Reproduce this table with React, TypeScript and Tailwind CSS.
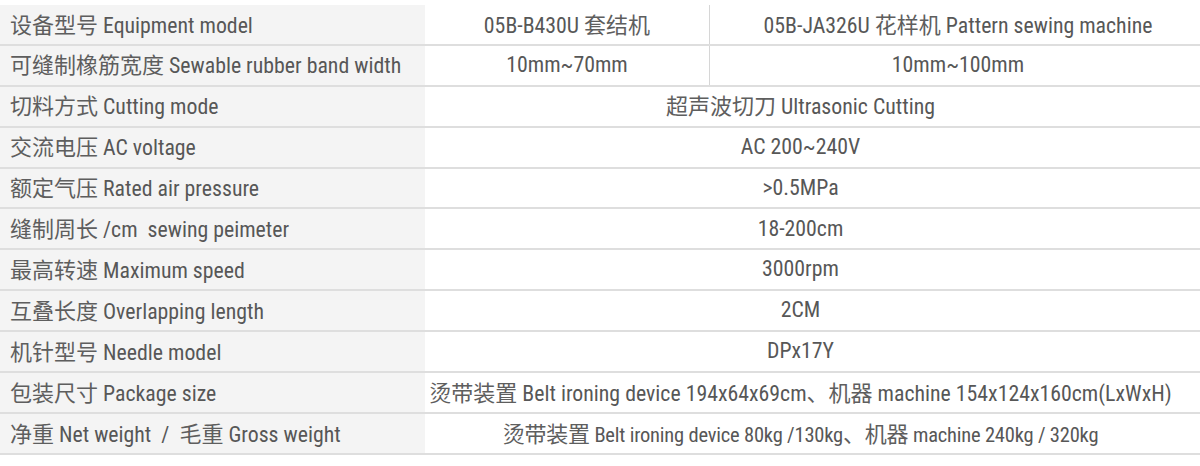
import React from "react";

const rows: { label: string; a: string; b?: string; small?: boolean }[] = [
    { label: "设备型号 Equipment model", a: "05B-B430U 套结机", b: "05B-JA326U 花样机 Pattern sewing machine" },
    { label: "可缝制橡筋宽度 Sewable rubber band width", a: "10mm~70mm", b: "10mm~100mm" },
    { label: "切料方式 Cutting mode", a: "超声波切刀 Ultrasonic Cutting" },
    { label: "交流电压 AC voltage", a: "AC 200~240V" },
    { label: "额定气压 Rated air pressure", a: ">0.5MPa" },
    { label: "缝制周长 /cm  sewing peimeter", a: "18-200cm" },
    { label: "最高转速 Maximum speed", a: "3000rpm" },
    { label: "互叠长度 Overlapping length", a: "2CM" },
    { label: "机针型号 Needle model", a: "DPx17Y" },
    { label: "包装尺寸 Package size", a: "烫带装置 Belt ironing device 194x64x69cm、机器 machine 154x124x160cm(LxWxH)" },
    { label: "净重 Net weight  /  毛重 Gross weight", a: "烫带装置 Belt ironing device 80kg /130kg、机器 machine 240kg / 320kg", small: true },
];

const font = "font-['Roboto_Condensed','Liberation_Sans_Narrow','Noto_Sans_CJK_SC',sans-serif]";

// CJK runs are drawn a bit larger than the latin text, as in the original
const Mixed = ({ text }: { text: string }) => {
    const parts = text.split(/([\u3000-\u9fff\uff00-\uffef]+)/).filter(Boolean);
    return (
        <span className="whitespace-pre">
            {parts.map((p, i) =>
                /[\u3000-\u9fff\uff00-\uffef]/.test(p) ? (
                    <span key={i} className="text-[22px] text-[#5e5e5e] font-['Noto_Sans_CJK_SC',sans-serif]">{p}</span>
                ) : (
                    <span key={i}>{p}</span>
                )
            )}
        </span>
    );
};

const App = () => {
    return (
        <div className={`w-[1200px] h-[466px] bg-white pt-[5px] text-[21.8px] text-[#575757] ${font}`}>
            {rows.map((r) => (
                <div key={r.label} className="grid grid-cols-[425px_285px_1fr] h-[40.9px] border-b-2 border-[#dedede]">
                    {/* label column */}
                    <div className="bg-[#f4f4f4] flex items-center pl-[10px]">
                        <Mixed text={r.label} />
                    </div>
                    {r.b ? (
                        <>
                            <div className="flex items-center justify-center border-r border-[#d6d6d6]">
                                <Mixed text={r.a} />
                            </div>
                            <div className="flex items-center justify-center pl-[6px]">
                                <Mixed text={r.b} />
                            </div>
                        </>
                    ) : (
                        <div className={`col-span-2 flex items-center justify-center pr-[24px] ${r.small ? "text-[20.5px] tracking-[-0.2px]" : ""}`}>
                            <Mixed text={r.a} />
                        </div>
                    )}
                </div>
            ))}
        </div>
    );
};

export default App;
